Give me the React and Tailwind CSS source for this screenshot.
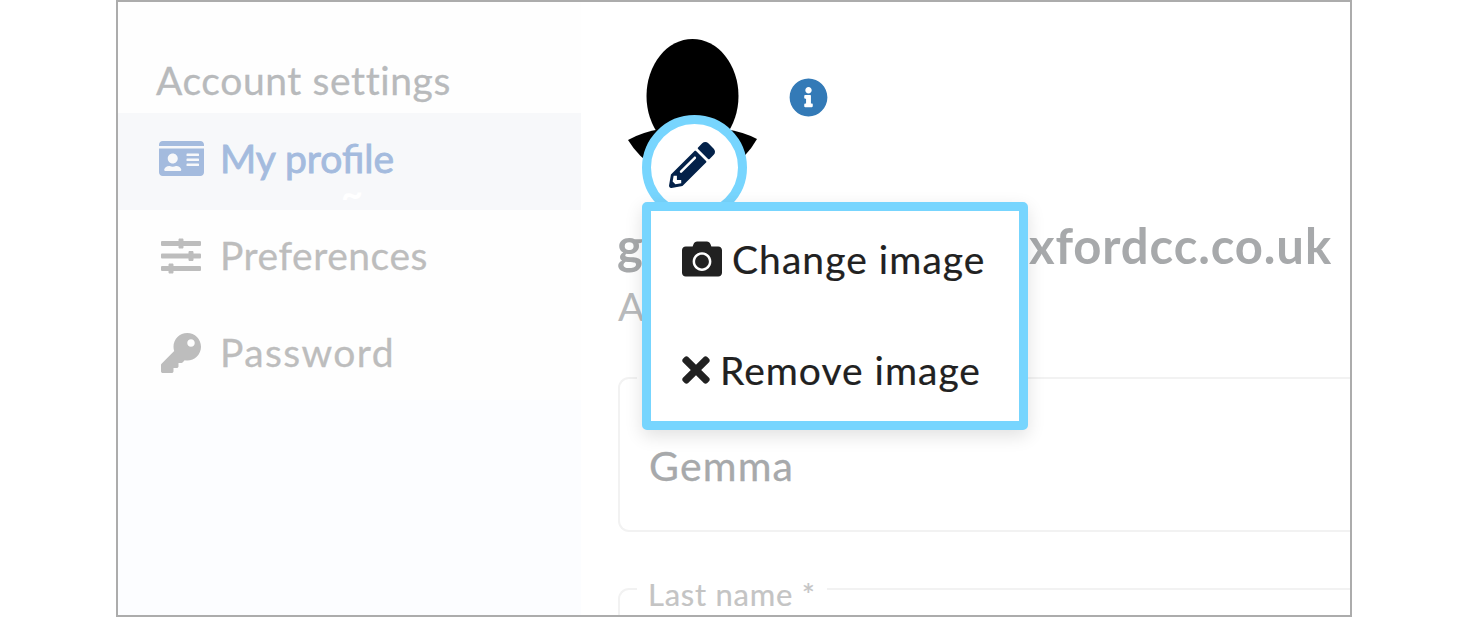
import {
  FaIdCard, FaSlidersH, FaKey, FaCamera, FaTimes, FaInfoCircle, FaPencilAlt,
} from "react-icons/fa";

function Avatar() {
  return (
    <svg className="block h-[150px] w-[130px]" viewBox="0 0 130 150">
      <path d="M0 101 Q14 93 33 90 H97 Q116 93 129 100 Q108 137 65 137 Q22 137 0 101 Z" fill="#000" />
      <ellipse cx="64.5" cy="57" rx="46" ry="57" fill="#000" />
    </svg>
  );
}

function NavItem({ children, icon, active }) {
  return (
    <div className={"flex h-[97px] shrink-0 items-center pb-[6px] pl-[41px] text-[39px] leading-none " + (active ? "bg-[#f7f8fa] text-[#a4bbde]" : "text-[#bdbdbd]")}>
      <span className="mr-[17px] flex w-[44px] justify-center text-[40px]">{icon}</span>
      {children}
    </div>
  );
}

export default function App() {
  return (
    <div className="flex h-[618px] w-[1477px] overflow-hidden bg-white pl-[116px] font-['Lato',sans-serif] whitespace-nowrap">
      <div className="flex h-[617px] w-[1236px] overflow-hidden border-2 border-[#acacac] bg-white">
        <aside className="flex w-[463px] shrink-0 flex-col bg-[#fefefe]">
          <h2 className="flex h-[111px] shrink-0 items-center pt-[46px] pl-[38px] text-[39px] leading-none text-[#b8babc]">
            <span className="tracking-[0.6px] [-webkit-text-stroke:0.3px_#b8babc]">Account settings</span>
          </h2>
          <nav className="relative flex h-[287px] shrink-0 flex-col">
            <NavItem icon={<FaIdCard className="size-[45px] shrink-0" />} active>
              <span className="tracking-[0.01px] [font-feature-settings:'liga'_1] [-webkit-text-stroke:0.9px_#a4bbde]">My profile</span>
            </NavItem>
            <NavItem icon={<FaSlidersH />}>
              <span className="tracking-[0.55px] [-webkit-text-stroke:0.3px_#bdbdbd]">Preferences</span>
            </NavItem>
            <NavItem icon={<FaKey />}>
              <span className="tracking-[1.4px] [-webkit-text-stroke:0.3px_#bdbdbd]">Password</span>
            </NavItem>
            <span className="absolute top-[70px] left-[223px] text-[38px] leading-[20px] font-bold text-white">~</span>
          </nav>
          <div className="flex-1 bg-[#fcfdff]" />
        </aside>

        <main className="flex w-[769px] shrink-0 flex-col">
          <div className="relative z-10 flex h-[210px] shrink-0 pt-[37px] pl-[47px]">
            <Avatar />
            <FaInfoCircle className="mt-[39px] ml-[31px] size-[39px] text-[#337ab7]" />
            <div className="absolute top-[113px] left-[61px] flex size-[105px] items-center justify-center rounded-full border-[9px] border-[#77d5fe] bg-white">
              <FaPencilAlt className="mr-[5px] mb-[6px] size-[46px] text-[#032149]" />
            </div>
            <div className="absolute top-[200px] left-[61px] h-[228px] w-[386px] rounded-[5px] border-[9px] border-[#77d5fe] bg-white pl-[31px] text-[39px] text-[#212121] shadow-[0_6px_18px_rgba(0,0,0,0.12)]">
              <div className="flex h-[96px] items-center gap-[10px]">
                <FaCamera className="size-[40px]" />
                <span className="tracking-[1.05px] [-webkit-text-stroke:0.2px_#212121]">Change image</span>
              </div>
              <div className="mt-[15px] flex h-[96px] items-center gap-[10px]">
                <FaTimes className="h-[40px] w-[28px]" />
                <span className="tracking-[1px] [-webkit-text-stroke:0.2px_#212121]">Remove image</span>
              </div>
            </div>
          </div>
          <div className="flex h-[68px] shrink-0 items-center justify-between pr-[18px] pl-[36px] text-[49px] font-bold text-[#a7a9ab]">
            <span>g</span>
            <span className="tracking-[0.9px]">xfordcc.co.uk</span>
          </div>
          <div className="flex h-[52px] shrink-0 items-center pl-[37px] text-[39px] text-[#b8babc]">A</div>
          <fieldset className="mt-[38px] ml-[37px] h-[162px] shrink-0 rounded-l-[11px] border-2 border-r-0 border-[#f2f2f2] pl-[17px]">
            <legend className="h-[16px] w-[200px]" />
            <div className="pt-[55px] pl-[12px] text-[41px] leading-[50px] text-[#a7a9ab]">
              <span className="tracking-[1.2px] [-webkit-text-stroke:0.3px_#a7a9ab]">Gemma</span>
            </div>
          </fieldset>
          <fieldset className="mt-[42px] ml-[37px] h-[100px] shrink-0 rounded-l-[11px] border-2 border-r-0 border-[#f2f2f2] pl-[17px]">
            <legend className="h-[30px] w-[190px] pl-[11px] text-[31px] leading-[40px] text-[#c4c4c4]">
              <span className="tracking-[0.75px] [-webkit-text-stroke:0.2px_#c4c4c4]">Last name *</span>
            </legend>
          </fieldset>
        </main>
      </div>
    </div>
  );
}
